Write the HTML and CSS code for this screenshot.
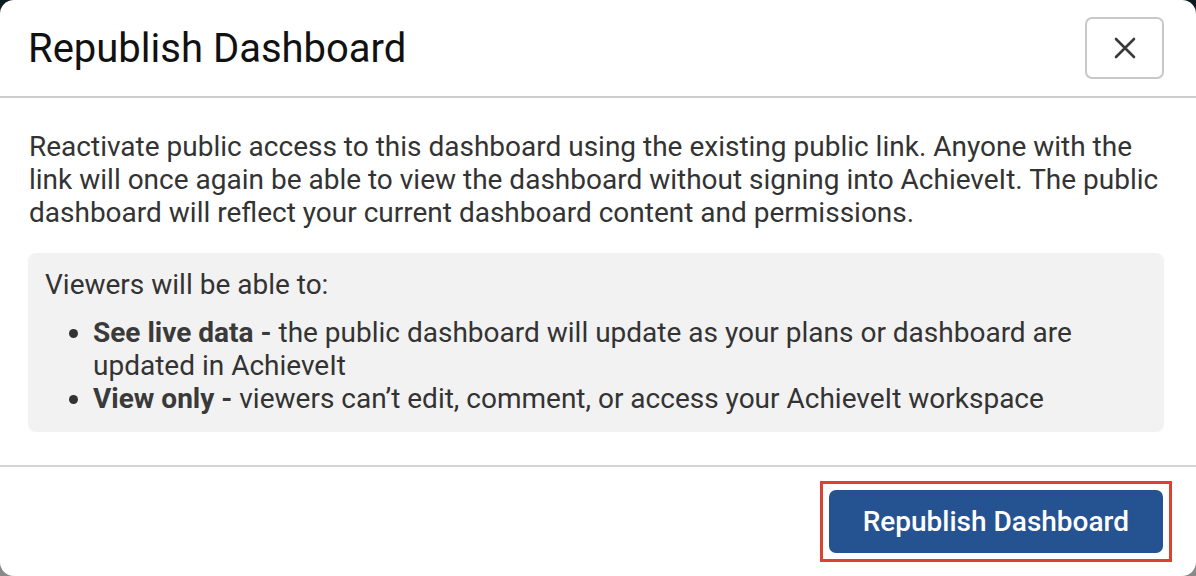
FILE: index.html
```html
<!DOCTYPE html>
<html lang="en">
<head>
  <meta charset="UTF-8">
  <meta name="viewport" content="width=device-width, initial-scale=1.0">
  <title>Republish Dashboard</title>
  <link rel="stylesheet" href="styles.css">
</head>
<body>
  <div class="modal" role="dialog" aria-labelledby="modal-title">
    <header class="modal-header">
      <h2 id="modal-title" class="modal-title">Republish Dashboard</h2>
      <button class="close-btn" aria-label="Close">
        <svg width="22" height="22" viewBox="0 0 22 22">
          <path d="M2 2 L20 20 M20 2 L2 20" stroke="#3a3a3a" stroke-width="2.6" stroke-linecap="round" fill="none"/>
        </svg>
      </button>
    </header>

    <div class="modal-body">
      <p class="intro">Reactivate public access to this dashboard using the existing public link. Anyone with the link will once again be able to view the dashboard without signing into AchieveIt. The public dashboard will reflect your current dashboard content and permissions.</p>

      <div class="info-box">
        <p class="info-title">Viewers will be able to:</p>
        <ul class="info-list">
          <li><strong>See live data -</strong> the public dashboard will update as your plans or dashboard are updated in AchieveIt</li>
          <li><strong>View only -</strong> viewers can’t edit, comment, or access your AchieveIt workspace</li>
        </ul>
      </div>
    </div>

    <footer class="modal-footer">
      <!-- highlighted action -->
      <div class="highlight">
        <button class="primary-btn">Republish Dashboard</button>
      </div>
    </footer>
  </div>
</body>
</html>
```

FILE: styles.css
```css
body {
  margin: 0;
  font-family: Roboto, "Liberation Sans", Arial, sans-serif;
  background: linear-gradient(#0e1a22, #3a3f44 60%, #8a8a8a);
  height: 576px;
  overflow: hidden;
}
.modal {
  background-color: #fff;
  height: 576px;
  border-radius: 14px;
  display: flex;
  flex-direction: column;
}
.modal-header {
  height: 96px;
  display: flex;
  align-items: center;
  justify-content: space-between;
  padding: 0 32px 0 28px;
  border-bottom: 2px solid #cdcdcd;
}
.modal-title {
  margin: 0;
  font-size: 40px;
  font-weight: 400;
  color: #111;
}
.close-btn {
  width: 79px;
  height: 62px;
  margin-top: -1px;
  background: #fff;
  border: 2px solid #c8c8c8;
  border-radius: 7px;
  display: flex;
  align-items: center;
  justify-content: center;
  padding: 0;
  cursor: pointer;
}
.modal-body {
  padding: 32px 32px 33px 28px;
  color: #333;
  font-size: 28px;
  line-height: 33px;
}
.intro {
  margin: 0 0 24px 1px;
}
.info-box {
  background-color: #f2f2f2;
  border-radius: 8px;
  padding: 15px 17px 17px 17px;
}
.info-title {
  margin: 0 0 15px 0;
}
.info-list {
  margin: 0;
  padding-left: 48px;
}
.info-list strong {
  font-weight: 700;
  color: #3a3a3a;
}
.modal-footer {
  flex: 1;
  border-top: 2px solid #d4d4d4;
  display: flex;
  justify-content: flex-end;
  align-items: flex-start;
  padding: 14px 24px 0 0;
}
.highlight {
  border: 3px solid #d9432f;
  padding: 6px;
  display: flex;
}
.primary-btn {
  height: 63px;
  padding: 0 34px;
  font-family: Roboto, "Liberation Sans", Arial, sans-serif;
  font-size: 28px;
  font-weight: 500;
  color: #fff;
  background-color: #255392;
  border: none;
  border-radius: 7px;
  cursor: pointer;
}
```
